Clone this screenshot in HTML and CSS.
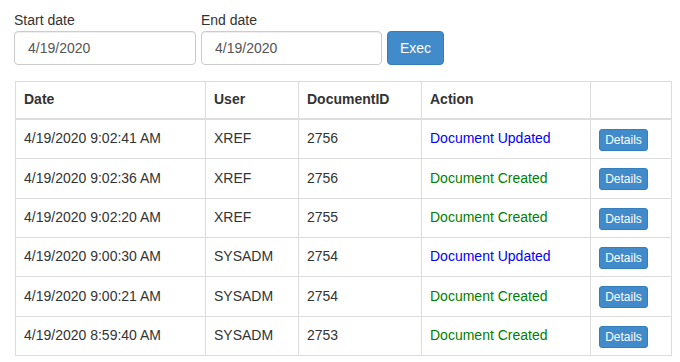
FILE: index.html
```html
<!DOCTYPE html>
<html>
<head>
<meta charset="utf-8">
<link rel="stylesheet" href="styles.css">
</head>
<body>
<div class="page">
  <div class="filters">
    <div class="field">
      <label class="lbl">Start date</label>
      <input class="inp inp-start" type="text" value="4/19/2020">
    </div>
    <div class="field">
      <label class="lbl">End date</label>
      <div class="row-inline">
        <input class="inp inp-end" type="text" value="4/19/2020">
        <button class="btn-exec">Exec</button>
      </div>
    </div>
  </div>
  <table class="grid">
    <colgroup>
      <col class="c1"><col class="c2"><col class="c3"><col class="c4"><col class="c5">
    </colgroup>
    <thead>
      <tr><th>Date</th><th>User</th><th>DocumentID</th><th>Action</th><th></th></tr>
    </thead>
    <tbody>
      <tr><td>4/19/2020 9:02:41 AM</td><td>XREF</td><td>2756</td><td class="upd">Document Updated</td><td><button class="btn-xs">Details</button></td></tr>
      <tr><td>4/19/2020 9:02:36 AM</td><td>XREF</td><td>2756</td><td class="crt">Document Created</td><td><button class="btn-xs">Details</button></td></tr>
      <tr><td>4/19/2020 9:02:20 AM</td><td>XREF</td><td>2755</td><td class="crt">Document Created</td><td><button class="btn-xs">Details</button></td></tr>
      <tr><td>4/19/2020 9:00:30 AM</td><td>SYSADM</td><td>2754</td><td class="upd">Document Updated</td><td><button class="btn-xs">Details</button></td></tr>
      <tr><td>4/19/2020 9:00:21 AM</td><td>SYSADM</td><td>2754</td><td class="crt">Document Created</td><td><button class="btn-xs">Details</button></td></tr>
      <tr><td>4/19/2020 8:59:40 AM</td><td>SYSADM</td><td>2753</td><td class="crt">Document Created</td><td><button class="btn-xs">Details</button></td></tr>
    </tbody>
  </table>
</div>
</body>
</html>
```

FILE: styles.css
```css
* { box-sizing: border-box; }
html, body { margin: 0; padding: 0; background: #fff; }
body {
  font-family: "Liberation Sans", Arial, sans-serif;
  font-size: 14px;
  line-height: 1.42857;
  color: #333;
}
.page { padding: 11px 9px 0 14px; }
.filters { display: flex; gap: 5px; }
.field { display: flex; flex-direction: column; }
.lbl { display: block; margin-bottom: 0; font-weight: normal; }
.row-inline { display: flex; gap: 5px; }
.inp {
  height: 34px;
  padding: 6px 13px;
  font-family: inherit;
  font-size: 14px;
  color: #555;
  background: #fff;
  border: 1px solid #ccc;
  border-radius: 4px;
  box-shadow: inset 0 1px 1px rgba(0,0,0,.075);
  outline: none;
}
.inp-start { width: 182px; }
.inp-end { width: 181px; }
.btn-exec {
  height: 34px;
  width: 57px;
  padding: 6px 12px;
  font-family: inherit;
  font-size: 14px;
  color: #fff;
  background: #428bca;
  border: 1px solid #357ebd;
  border-radius: 4px;
}
.grid {
  margin-top: 16px;
  margin-left: 1px;
  width: 656px;
  border-collapse: collapse;
  border: 1px solid #ddd;
  table-layout: fixed;
}
.c1 { width: 190px; }
.c2 { width: 93px; }
.c3 { width: 123px; }
.c4 { width: 169px; }
.c5 { width: 81px; }
.grid th, .grid td {
  padding: 8px;
  border: 1px solid #ddd;
  text-align: left;
  line-height: 1.42857;
}
.grid th { font-weight: bold; border-bottom: 2px solid #ddd; vertical-align: top; }
.grid td { padding-top: 8px; padding-bottom: 7.33px; vertical-align: middle; }
.upd { color: #0000ff; }
.crt { color: #008000; }
.btn-xs {
  display: block;
  margin-left: 0;
  margin-top: 1px;
  padding: 1px 5px;
  width: 49px;
  height: 22px;
  font-family: inherit;
  font-size: 12px;
  line-height: 18px;
  color: #fff;
  background: #428bca;
  border: 1px solid #357ebd;
  border-radius: 3px;
}
```
